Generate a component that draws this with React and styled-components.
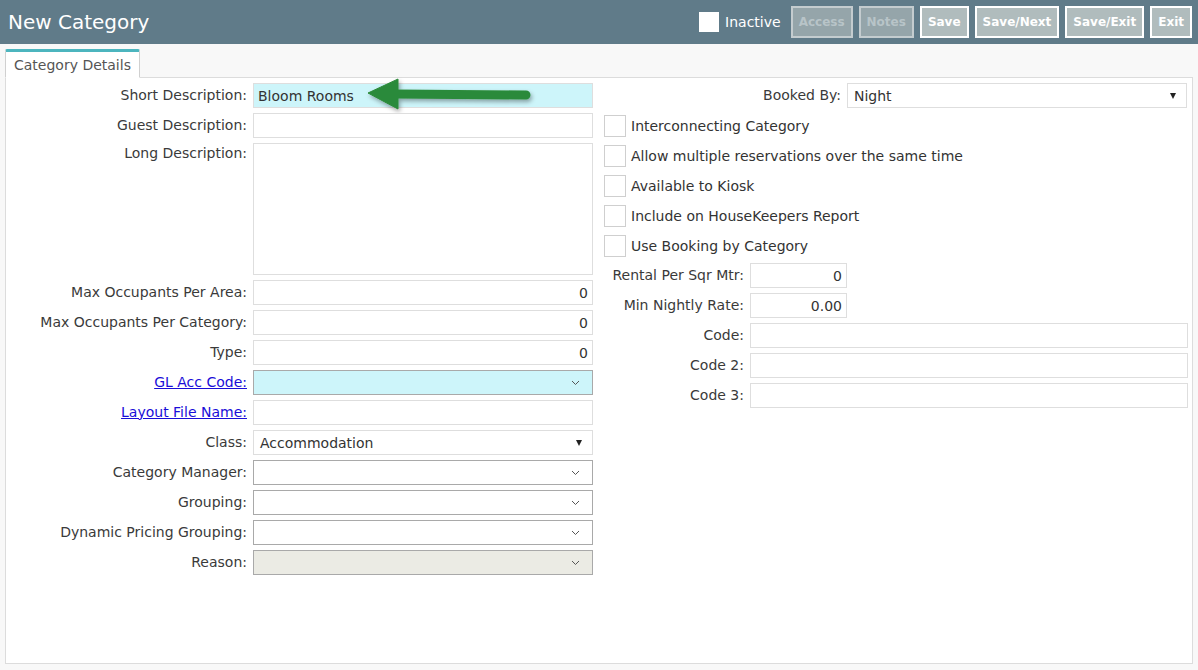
import styled, { createGlobalStyle } from 'styled-components';

const GlobalStyle = createGlobalStyle`
  html, body {
    margin: 0;
    padding: 0;
    background: #f8f8f8;
    font-family: "DejaVu Sans", Verdana, sans-serif;
    font-size: 14px;
    color: #333;
  }
  * { box-sizing: border-box; }
`;

/* Header bar */

const Header = styled.header`
  height: 44px;
  background: #607b89;
  display: flex;
  align-items: center;
  padding: 0 6px 0 8px;
`;

const Title = styled.h1`
  margin: 0;
  flex: 1;
  font-size: 20px;
  font-weight: normal;
  color: #fff;
`;

const InactiveToggle = styled.label`
  display: flex;
  align-items: center;
  gap: 6px;
  margin-right: 10px;
  color: #fff;
  font-size: 14px;
`;

const WhiteBox = styled.span`
  width: 20px;
  height: 20px;
  background: #fff;
`;

const Toolbar = styled.div`
  display: flex;
  gap: 6px;
`;

const HeadButton = styled.button`
  height: 32px;
  padding: 0 6px;
  font-family: inherit;
  font-size: 12px;
  font-weight: bold;
  border: 2px solid ${(p) => (p.disabled ? '#c4cccf' : '#fff')};
  background: ${(p) => (p.disabled ? '#95a5aa' : '#b0bcbd')};
  color: ${(p) => (p.disabled ? '#b8c4c8' : '#fff')};
`;

/* Tab + panel */

const Body = styled.div`
  padding: 5px 5px 7px 5px;
`;

const TabStrip = styled.div`
  display: flex;
  margin-bottom: -1px;
  position: relative;
  z-index: 1;
`;

const Tab = styled.div`
  height: 29px;
  padding: 4px 8px 0 8px;
  background: #fff;
  border: 1px solid #d0d0d0;
  border-top: 3px solid #4cb5be;
  border-bottom-color: #fff;
  border-radius: 2px 2px 0 0;
  color: #555;
  font-size: 14px;
  line-height: 18px;
`;

const Panel = styled.section`
  min-height: 587px;
  background: #fff;
  border: 1px solid #dcdcdc;
  padding: 5px 4px 0 0;
  display: flex;
  gap: 11px;
`;

const Column = styled.div`
  display: flex;
  flex-direction: column;
  gap: 5px;
  flex: ${(p) => (p.grow ? 1 : 'none')};
`;

const Row = styled.div`
  display: grid;
  grid-template-columns: ${(p) => p.labelWidth}px ${(p) => p.fieldWidth || '1fr'};
  column-gap: 6px;
  align-items: ${(p) => (p.top ? 'start' : 'center')};
`;

const Label = styled.label`
  text-align: right;
  white-space: nowrap;
  color: #3a3a3a;
  padding-top: ${(p) => (p.top ? '2px' : '0')};
  margin-top: ${(p) => (p.top ? '0' : '-2px')};
`;

const LinkLabel = styled.a`
  text-align: right;
  white-space: nowrap;
  color: #1a0dd8;
  text-decoration: underline;
  margin-top: -2px;
`;

const TextBox = styled.div`
  position: relative;
  height: ${(p) => p.height || 25}px;
  border: 1px solid #dedede;
  background: ${(p) => (p.highlight ? '#cdf5fa' : '#fff')};
  padding: 0 4px;
  display: flex;
  align-items: center;
  justify-content: ${(p) => (p.numeric ? 'flex-end' : 'flex-start')};
  font-size: 14px;
  color: #333;
`;

const Combo = styled.div`
  height: 25px;
  border: 1px solid ${(p) => (p.plain ? '#dedede' : '#a9a9a9')};
  background: ${(p) => p.bg || '#fff'};
  display: flex;
  align-items: center;
  justify-content: space-between;
  padding: 0 10px 0 6px;
  font-size: 14px;
  color: #333;
`;

const Triangle = styled.span`
  width: 0;
  height: 0;
  border-left: 3.5px solid transparent;
  border-right: 3.5px solid transparent;
  border-top: 6px solid #222;
`;

const Chevron = () => (
  <svg width="9" height="6" viewBox="0 0 9 6" style={{ marginRight: 2 }}>
    <polyline points="1,1 4.5,4.5 8,1" fill="none" stroke="#555" strokeWidth="1" />
  </svg>
);

const CheckRow = styled.label`
  height: 25px;
  display: flex;
  align-items: center;
  gap: 5px;
  font-size: 14px;
  color: #333;
`;

const Box = styled.span`
  width: 22px;
  height: 22px;
  border: 1px solid #cfcfcf;
  background: #fff;
`;

const Arrow = styled.svg`
  position: absolute;
  left: 108px;
  top: -6px;
  overflow: visible;
`;

const PointerArrow = () => (
  <Arrow width="180" height="36" viewBox="0 0 180 36">
    <defs>
      <filter id="sh" x="-20%" y="-50%" width="140%" height="200%">
        <feDropShadow dx="1.5" dy="2.5" stdDeviation="2" floodColor="#000" floodOpacity="0.35" />
      </filter>
    </defs>
    <g filter="url(#sh)" fill="#2b8a3a" stroke="#2b8a3a">
      <line x1="34" y1="16" x2="164" y2="17" strokeWidth="9" strokeLinecap="round" />
      <polygon points="6,15 36,1 36,31" strokeWidth="1" strokeLinejoin="round" />
    </g>
  </Arrow>
);

const left = [
  { label: 'Max Occupants Per Area:', value: '0' },
  { label: 'Max Occupants Per Category:', value: '0' },
  { label: 'Type:', value: '0' },
];

const leftCombos = ['Category Manager:', 'Grouping:', 'Dynamic Pricing Grouping:'];

const checks = [
  'Interconnecting Category',
  'Allow multiple reservations over the same time',
  'Available to Kiosk',
  'Include on HouseKeepers Report',
  'Use Booking by Category',
];

export default function App() {
  return (
    <>
      <GlobalStyle />
      <Header>
        <Title>New Category</Title>
        <InactiveToggle>
          <WhiteBox />
          Inactive
        </InactiveToggle>
        <Toolbar>
          <HeadButton disabled>Access</HeadButton>
          <HeadButton disabled>Notes</HeadButton>
          <HeadButton>Save</HeadButton>
          <HeadButton>Save/Next</HeadButton>
          <HeadButton>Save/Exit</HeadButton>
          <HeadButton>Exit</HeadButton>
        </Toolbar>
      </Header>
      <Body>
        <TabStrip>
          <Tab>Category Details</Tab>
        </TabStrip>
        <Panel>
          <Column>
            <Row labelWidth={241} fieldWidth="340px">
              <Label>Short Description:</Label>
              <TextBox highlight>
                Bloom Rooms
                <PointerArrow />
              </TextBox>
            </Row>
            <Row labelWidth={241} fieldWidth="340px">
              <Label>Guest Description:</Label>
              <TextBox />
            </Row>
            <Row labelWidth={241} fieldWidth="340px" top>
              <Label top>Long Description:</Label>
              <TextBox height={132} />
            </Row>
            {left.map((f) => (
              <Row key={f.label} labelWidth={241} fieldWidth="340px">
                <Label>{f.label}</Label>
                <TextBox numeric>{f.value}</TextBox>
              </Row>
            ))}
            <Row labelWidth={241} fieldWidth="340px">
              <LinkLabel href="#">GL Acc Code:</LinkLabel>
              <Combo bg="#cdf5fa">
                <span />
                <Chevron />
              </Combo>
            </Row>
            <Row labelWidth={241} fieldWidth="340px">
              <LinkLabel href="#">Layout File Name:</LinkLabel>
              <TextBox />
            </Row>
            <Row labelWidth={241} fieldWidth="340px">
              <Label>Class:</Label>
              <Combo plain>
                Accommodation
                <Triangle />
              </Combo>
            </Row>
            {leftCombos.map((l) => (
              <Row key={l} labelWidth={241} fieldWidth="340px">
                <Label>{l}</Label>
                <Combo>
                  <span />
                  <Chevron />
                </Combo>
              </Row>
            ))}
            <Row labelWidth={241} fieldWidth="340px">
              <Label>Reason:</Label>
              <Combo bg="#ebebe4">
                <span />
                <Chevron />
              </Combo>
            </Row>
          </Column>
          <Column grow>
            <Row labelWidth={237} fieldWidth="340px">
              <Label>Booked By:</Label>
              <Combo plain>
                Night
                <Triangle />
              </Combo>
            </Row>
            {checks.map((c) => (
              <CheckRow key={c}>
                <Box />
                {c}
              </CheckRow>
            ))}
            <Row labelWidth={140} fieldWidth="97px">
              <Label>Rental Per Sqr Mtr:</Label>
              <TextBox numeric>0</TextBox>
            </Row>
            <Row labelWidth={140} fieldWidth="97px">
              <Label>Min Nightly Rate:</Label>
              <TextBox numeric>0.00</TextBox>
            </Row>
            {['Code:', 'Code 2:', 'Code 3:'].map((c) => (
              <Row key={c} labelWidth={140}>
                <Label>{c}</Label>
                <TextBox />
              </Row>
            ))}
          </Column>
        </Panel>
      </Body>
    </>
  );
}
